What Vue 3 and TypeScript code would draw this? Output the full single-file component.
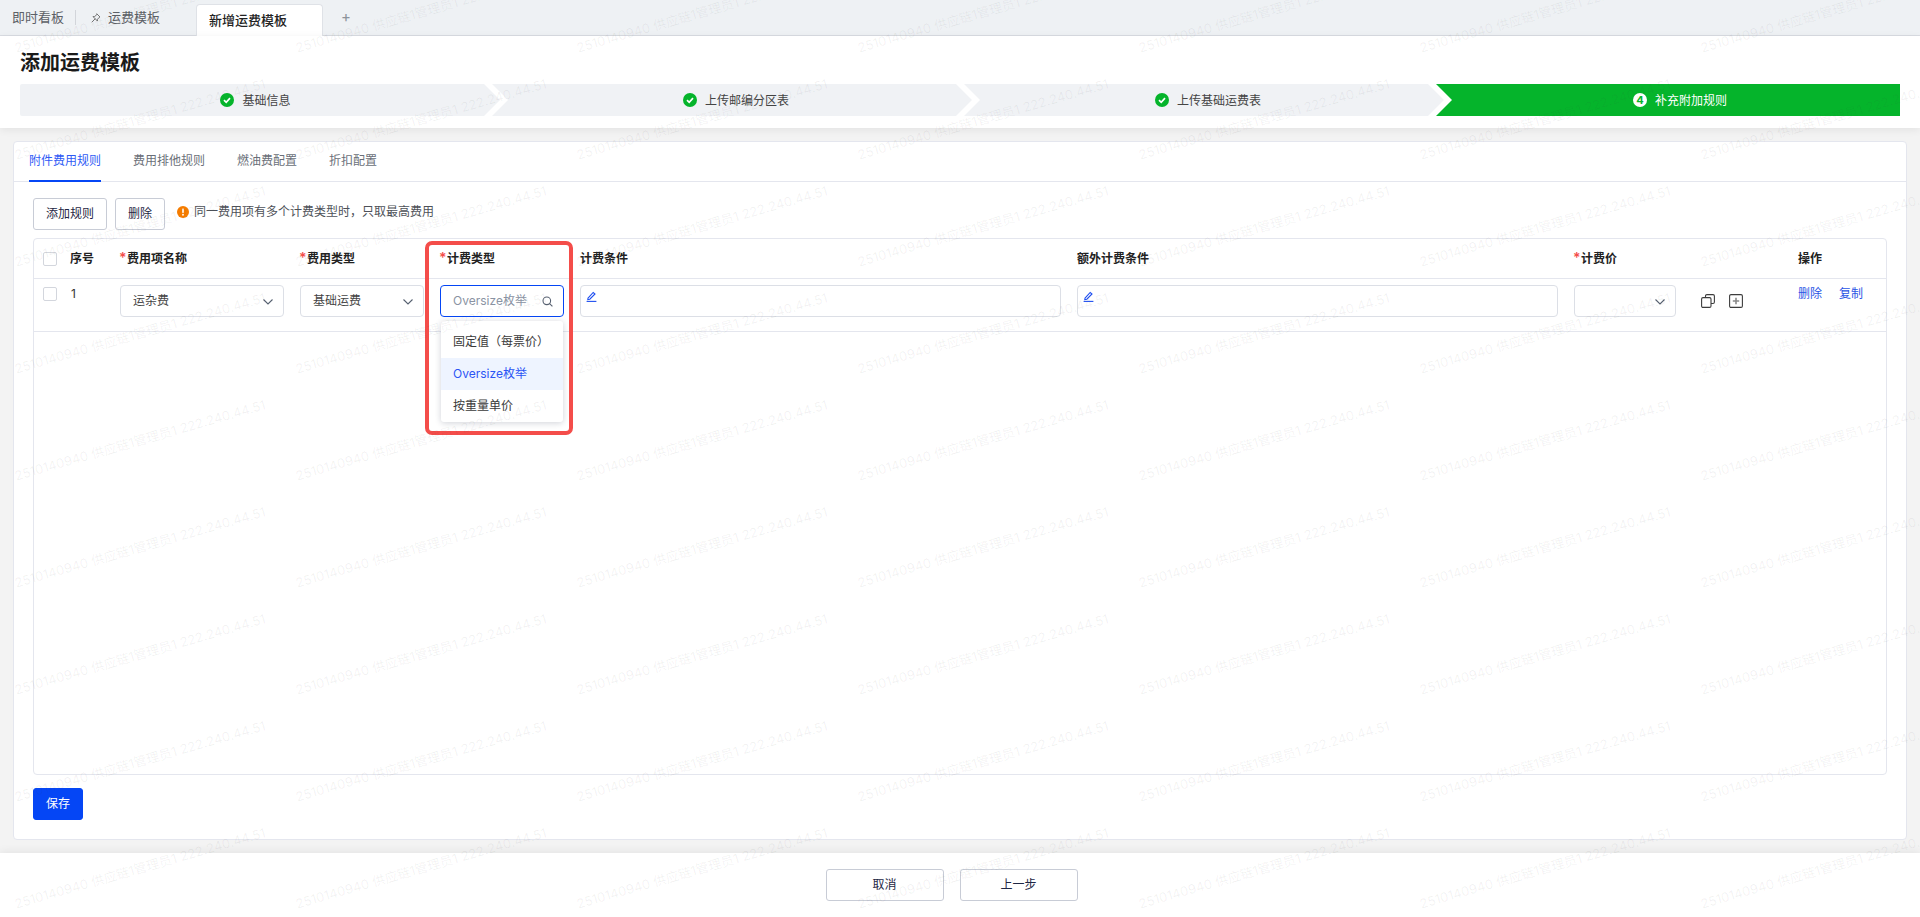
<script setup lang="ts">
const steps = [
  { label: '基础信息', cls: 's1' },
  { label: '上传邮编分区表', cls: 's2' },
  { label: '上传基础运费表', cls: 's3' },
]
const marks = Array.from({ length: 70 }, (_, i) => i)
const options = ['固定值（每票价）', 'Oversize枚举', '按重量单价']
</script>

<template>
  <div class="page">
    <nav class="tabbar">
      <span class="top-tab first">即时看板</span>
      <i class="divider"></i>
      <svg class="pin" width="10" height="10" viewBox="0 0 10 10" fill="none" stroke="#666" stroke-width="0.9" stroke-linejoin="round" stroke-linecap="round">
        <path d="M6 1 9 4 8.2 4.4 6.5 6.3 6.4 8 2 3.6 3.7 3.5 5.6 1.8Z" />
        <path d="M4 6 1 9" />
      </svg>
      <span class="top-tab second">运费模板</span>
      <span class="top-tab active">新增运费模板</span>
      <span class="plus">+</span>
    </nav>

    <header class="head">
      <h1>添加运费模板</h1>
      <div class="steps">
        <div v-for="s in steps" :key="s.label" class="step" :class="s.cls">
          <svg width="14" height="14" viewBox="0 0 14 14">
            <circle cx="7" cy="7" r="7" fill="#05b42b" />
            <path d="M4 7.2 6.2 9.3 10 5.2" fill="none" stroke="#fff" stroke-width="1.7" />
          </svg>
          <span class="step-label">{{ s.label }}</span>
        </div>
        <div class="step s4">
          <b class="num">4</b>
          <span class="step-label">补充附加规则</span>
        </div>
      </div>
    </header>

    <main class="body">
      <section class="card">
        <div class="card-tabs">
          <span class="ctab on">附件费用规则</span>
          <span class="ctab">费用排他规则</span>
          <span class="ctab">燃油费配置</span>
          <span class="ctab">折扣配置</span>
        </div>
        <div class="content">
          <div class="toolbar">
            <button class="btn">添加规则</button>
            <button class="btn">删除</button>
            <svg class="warn" width="12" height="12" viewBox="0 0 12 12">
              <circle cx="6" cy="6" r="6" fill="#f57c00" />
              <rect x="5.2" y="2.4" width="1.6" height="4.6" rx="0.7" fill="#fff" />
              <circle cx="6" cy="8.8" r="0.95" fill="#fff" />
            </svg>
            <span class="tip">同一费用项有多个计费类型时，只取最高费用</span>
          </div>

          <div class="table">
            <div class="grid thead">
              <span class="check"></span>
              <span>序号</span>
              <span><em>*</em>费用项名称</span>
              <span><em>*</em>费用类型</span>
              <span><em>*</em>计费类型</span>
              <span>计费条件</span>
              <span>额外计费条件</span>
              <span><em>*</em>计费价</span>
              <span></span>
              <span>操作</span>
            </div>
            <div class="grid trow">
              <span class="check"></span>
              <span class="idx">1</span>
              <div class="field select w1">运杂费
                <svg class="chev" width="10" height="6" viewBox="0 0 10 6"><path d="M.5.5 5 5 9.5.5" fill="none" stroke="#566070" stroke-width="1.1" /></svg>
              </div>
              <div class="field select w2">基础运费
                <svg class="chev" width="10" height="6" viewBox="0 0 10 6"><path d="M.5.5 5 5 9.5.5" fill="none" stroke="#566070" stroke-width="1.1" /></svg>
              </div>
              <div class="combo">
                <div class="field focus">
                  <span class="ph">Oversize枚举</span>
                  <svg class="search" width="11" height="11" viewBox="0 0 11 11" fill="none" stroke="#566070" stroke-width="1.1">
                    <circle cx="4.8" cy="4.8" r="3.8" /><path d="M7.6 7.6 10.4 10.4" />
                  </svg>
                </div>
                <ul class="menu">
                  <li v-for="(o, i) in options" :key="o" :class="{ sel: i === 1 }">{{ o }}</li>
                </ul>
              </div>
              <div class="field area">
                <svg width="11" height="11" viewBox="0 0 11 11" fill="none" stroke="#1f4ff0" stroke-width="1.1">
                  <path d="M2 7.2 7.2 1.4 9 3 3.8 8.2 1.8 8.6Z" /><path d="M.6 10.4H10.4" />
                </svg>
              </div>
              <div class="field area">
                <svg width="11" height="11" viewBox="0 0 11 11" fill="none" stroke="#1f4ff0" stroke-width="1.1">
                  <path d="M2 7.2 7.2 1.4 9 3 3.8 8.2 1.8 8.6Z" /><path d="M.6 10.4H10.4" />
                </svg>
              </div>
              <div class="field select w3">
                <svg class="chev" width="10" height="6" viewBox="0 0 10 6"><path d="M.5.5 5 5 9.5.5" fill="none" stroke="#566070" stroke-width="1.1" /></svg>
              </div>
              <div class="icons">
                <svg width="14" height="14" viewBox="0 0 14 14" fill="#fff" stroke="#3d3d3d" stroke-width="1.1">
                  <rect x="4.5" y="0.6" width="8.9" height="8.9" rx="1.4" />
                  <rect x="0.6" y="3.6" width="9.4" height="9.8" rx="1.4" />
                </svg>
                <svg width="14" height="14" viewBox="0 0 14 14" fill="none">
                  <rect x="0.6" y="0.6" width="12.8" height="12.8" rx="1.4" stroke="#3d3d3d" stroke-width="1.1" />
                  <path d="M7 3.8V10.2M3.8 7H10.2" stroke="#8a8a8a" stroke-width="1.6" />
                </svg>
              </div>
              <div class="ops"><a>删除</a><a>复制</a></div>
            </div>
          </div>

          <button class="btn primary">保存</button>
        </div>
      </section>
    </main>

    <footer class="foot">
      <button class="btn wide">取消</button>
      <button class="btn wide">上一步</button>
    </footer>

    <div class="highlight"></div>
    <div class="marks">
      <span v-for="m in marks" :key="m" class="mark"><span>2510140940 供应链1管理员1 222.240.44.51</span></span>
    </div>
  </div>
</template>

<style>
html, body { margin: 0; background: #f3f3f3; overflow: hidden; }
</style>

<style scoped>
.page {
  position: relative;
  display: flex;
  flex-direction: column;
  height: 917px;
  overflow: hidden;
  font: 12px/1.5 Inter, "Noto Sans CJK SC", sans-serif;
  color: #333;
  background: #f3f3f3;
}
.tabbar {
  display: flex;
  align-items: center;
  height: 36px;
  flex: none;
  box-sizing: border-box;
  background: #eef1f4;
  border-bottom: 1px solid #d9dce2;
  font-size: 13px;
  color: #5c6066;
}
.top-tab.first { margin-left: 12px; }
.divider { width: 1px; height: 15px; background: #d2d5da; margin: 0 15px 0 11px; }
.pin { margin-right: 7px; }
.top-tab.second { margin-right: 36px; }
.top-tab.active {
  align-self: flex-end;
  height: 32px;
  width: 127px;
  box-sizing: border-box;
  margin-bottom: -1px;
  padding-left: 12px;
  line-height: 31px;
  background: #fff;
  border: 1px solid #dfe2e7;
  border-bottom: 0;
  border-radius: 4px 4px 0 0;
  color: #222;
  font-weight: 500;
}
.plus { margin-left: 18px; font-size: 15px; color: #8d939b; width: 8px; }
.head {
  flex: none;
  height: 92px;
  box-sizing: border-box;
  padding: 13px 20px 12px;
  background: #fff;
  box-shadow: 0 2px 8px rgba(0, 0, 0, 0.07);
  position: relative;
}
h1 { margin: 0 0 7px; font-size: 20px; line-height: 28px; font-weight: 600; color: #1a1a1a; }
.steps { display: flex; height: 32px; }
.step {
  display: flex;
  align-items: center;
  justify-content: center;
  gap: 8px;
  box-sizing: border-box;
  width: 480px;
  margin-right: -8px;
  flex: none;
  background: #f0f2f5;
  color: #444;
  clip-path: polygon(0 0, calc(100% - 16px) 0, 100% 50%, calc(100% - 16px) 100%, 0 100%, 16px 50%);
}
.step-label { position: relative; top: 1px; }
.s1 { padding-right: 9px; border-radius: 2px; clip-path: polygon(0 0, calc(100% - 16px) 0, 100% 50%, calc(100% - 16px) 100%, 0 100%); }
.s2, .s3 { padding-left: 8px; }
.s4 {
  width: 464px;
  margin-right: 0;
  padding-left: 24px;
  background: #05b42b;
  color: #fff;
  clip-path: polygon(0 0, 100% 0, 100% 100%, 0 100%, 16px 50%);
}
.num {
  width: 14px;
  height: 14px;
  border-radius: 50%;
  background: #fff;
  color: #05b42b;
  font-size: 11px;
  line-height: 14px;
  text-align: center;
}
.body { flex: 1; min-height: 0; display: flex; padding: 13px; }
.card {
  flex: 1;
  display: flex;
  flex-direction: column;
  background: #fff;
  border: 1px solid #e4e6ee;
  border-radius: 4px;
}
.card-tabs {
  display: flex;
  gap: 32px;
  height: 40px;
  flex: none;
  box-sizing: border-box;
  padding-left: 15px;
  border-bottom: 1px solid #e4e6ee;
  color: #6a6f78;
}
.ctab { line-height: 38px; height: 40px; box-sizing: border-box; }
.ctab.on { color: #2f5bf5; border-bottom: 2px solid #0546f5; }
.content {
  flex: 1;
  min-height: 0;
  display: flex;
  flex-direction: column;
  align-items: flex-start;
  padding: 16px 19px 19px;
}
.toolbar { display: flex; align-items: center; height: 32px; margin-bottom: 8px; }
.btn {
  height: 32px;
  padding: 0 12px;
  margin: 0 8px 0 0;
  box-sizing: border-box;
  font: inherit;
  color: #1f2744;
  background: #fff;
  border: 1px solid #c8ccd6;
  border-radius: 3px;
}
.warn { margin: -4px 5px 0 4px; }
.tip { color: #4d5158; margin-top: -4px; }
.table {
  flex: 1;
  min-height: 0;
  align-self: stretch;
  box-sizing: border-box;
  border: 1px solid #e4e6ee;
  border-radius: 4px;
}
.grid {
  display: grid;
  grid-template-columns: 27px 50px 180px 140px 140px 497px 497px 127px 97px 1fr;
  padding-left: 9px;
  box-sizing: border-box;
  border-bottom: 1px solid #e4e6ee;
}
.thead { height: 40px; align-items: center; font-weight: 600; color: #222; }
.thead em { display: inline-block; width: 8px; margin-left: -1px; font-style: normal; color: #f44d4a; font-size: 14px; line-height: 1; }
.trow { height: 53px; align-items: start; padding-top: 6px; }
.check {
  display: block;
  width: 14px;
  height: 14px;
  box-sizing: border-box;
  border: 1px solid #d3d6dd;
  border-radius: 2px;
  background: #fff;
}
.trow .check { margin-top: 2px; }
.idx { padding-left: 1px; line-height: 17px; }
.field {
  position: relative;
  height: 32px;
  box-sizing: border-box;
  border: 1px solid #dcdfe6;
  border-radius: 4px;
  background: #fff;
  padding: 0 12px;
  line-height: 30px;
  color: #444;
}
.w1 { width: 164px; }
.w2 { width: 124px; }
.w3 { width: 102px; }
.area { width: 481px; padding: 0 5px; }
.area svg { display: block; margin-top: 5px; }
.chev { position: absolute; right: 10px; top: 13px; }
.combo { position: relative; width: 124px; }
.focus { border-color: #0546f5; }
.ph { color: #8a93a3; }
.search { position: absolute; right: 10px; top: 10px; }
.menu {
  position: absolute;
  left: 1px;
  right: 1px;
  top: 36px;
  margin: 0;
  padding: 5px 0 0;
  list-style: none;
  background: #fff;
  border-radius: 3px;
  box-shadow: 0 1px 6px rgba(20, 30, 60, 0.2);
}
.menu li { height: 32px; line-height: 32px; padding-left: 12px; color: #3a3a3a; white-space: nowrap; }
.menu li.sel { background: #eef4ff; color: #2b55f5; }
.icons { display: flex; gap: 14px; padding-top: 3px; margin-top: 6px; }
.ops { display: flex; gap: 17px; color: #2a55e5; line-height: 17px; }
.primary {
  width: 50px;
  padding: 0;
  margin: 13px 0 0;
  flex: none;
  color: #fff;
  background: #0546f5;
  border-color: #0546f5;
}
.foot {
  flex: none;
  height: 64px;
  box-sizing: border-box;
  display: flex;
  justify-content: center;
  align-items: flex-start;
  gap: 16px;
  padding: 16px 17px 0 0;
  background: #fff;
  box-shadow: 0 -2px 8px rgba(0, 0, 0, 0.06);
  position: relative;
}
.wide { width: 118px; margin: 0; }
.highlight {
  position: absolute;
  left: 425px;
  top: 241px;
  width: 148px;
  height: 194px;
  box-sizing: border-box;
  border: 4px solid #f44d4a;
  border-radius: 7px;
  pointer-events: none;
}
.marks {
  position: absolute;
  left: 0;
  top: -41px;
  display: grid;
  grid-template-columns: repeat(7, 281px);
  grid-auto-rows: 107px;
  pointer-events: none;
}
.mark { display: flex; align-items: center; justify-content: center; white-space: nowrap; }
.mark span {
  font-size: 13px;
  line-height: 1;
  color: rgba(60, 60, 60, 0.065);
  transform: rotate(-16deg);
}
</style>
